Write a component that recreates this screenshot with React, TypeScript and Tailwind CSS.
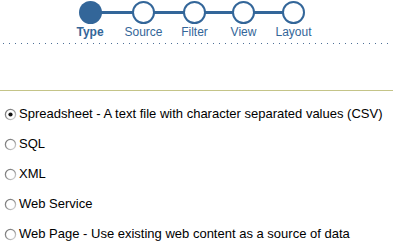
import React from 'react'

const steps = [
  { label: 'Type', width: 'w-[54px]', done: true },
  { label: 'Source', width: 'w-[53px]', done: false },
  { label: 'Filter', width: 'w-[49px]', done: false },
  { label: 'View', width: 'w-[49px]', done: false },
  { label: 'Layout', width: 'w-[51px]', done: false },
]

const options = [
  { label: 'Spreadsheet - A text file with character separated values (CSV)', checked: true },
  { label: 'SQL', checked: false },
  { label: 'XML', checked: false },
  { label: 'Web Service', checked: false },
  { label: 'Web Page - Use existing web content as a source of data', checked: false },
]

function Radio({ checked }: { checked: boolean }) {
  return (
    <svg width="13" height="13" viewBox="0 0 13 13" className="shrink-0">
      <defs>
        <linearGradient id="rim" x1="0" y1="0" x2="1" y2="1">
          <stop offset="0" stopColor="#707070" />
          <stop offset="0.55" stopColor="#999999" />
          <stop offset="1" stopColor="#e0e0e0" />
        </linearGradient>
      </defs>
      <circle cx="6.5" cy="6.5" r="5.1" fill="#ffffff" stroke="url(#rim)" strokeWidth="1.3" />
      {checked && <circle cx="6.5" cy="6.5" r="2.1" fill="#111111" />}
    </svg>
  )
}

export default function App() {
  return (
    <div className="w-[393px] h-[252px] bg-white overflow-hidden font-['Liberation_Sans',Arial,sans-serif]">
      {/* Wizard steps */}
      <div className="relative flex pl-[63px] pt-px h-[43px]">
        <div className="absolute left-[90px] top-[11px] w-[204px] h-[3px] bg-[#336699]" />
        {steps.map((s) => (
          <div key={s.label} className={`${s.width} relative flex flex-col items-center`}>
            <div
              className={
                s.done
                  ? 'w-[23px] h-[23px] rounded-full bg-[#336699]'
                  : 'w-[23px] h-[23px] rounded-full bg-white border-[2.5px] border-[#336699]'
              }
            />
            <span
              className={
                s.done
                  ? 'mt-[1px] text-[12px] leading-[14px] font-bold text-[#336699]'
                  : 'mt-[1px] text-[12px] leading-[14px] text-[#336699]'
              }
            >
              {s.label}
            </span>
          </div>
        ))}
      </div>

      {/* Dotted separator */}
      <div className="h-px bg-[linear-gradient(to_right,#4d6f96_1px,transparent_1px)] bg-[length:6px_1px] bg-[position:3px_0] bg-repeat-x" />

      {/* Olive rule */}
      <div className="mt-[46px] h-px bg-[#c4c488]" />

      {/* Source type options */}
      <div className="flex flex-col gap-[14px] pt-[15px]">
        {options.map((o) => (
          <label key={o.label} className="flex items-center gap-[2px] pl-[4px] h-[16px] text-[13px] text-black">
            <Radio checked={o.checked} />
            <span>{o.label}</span>
          </label>
        ))}
      </div>
    </div>
  )
}
